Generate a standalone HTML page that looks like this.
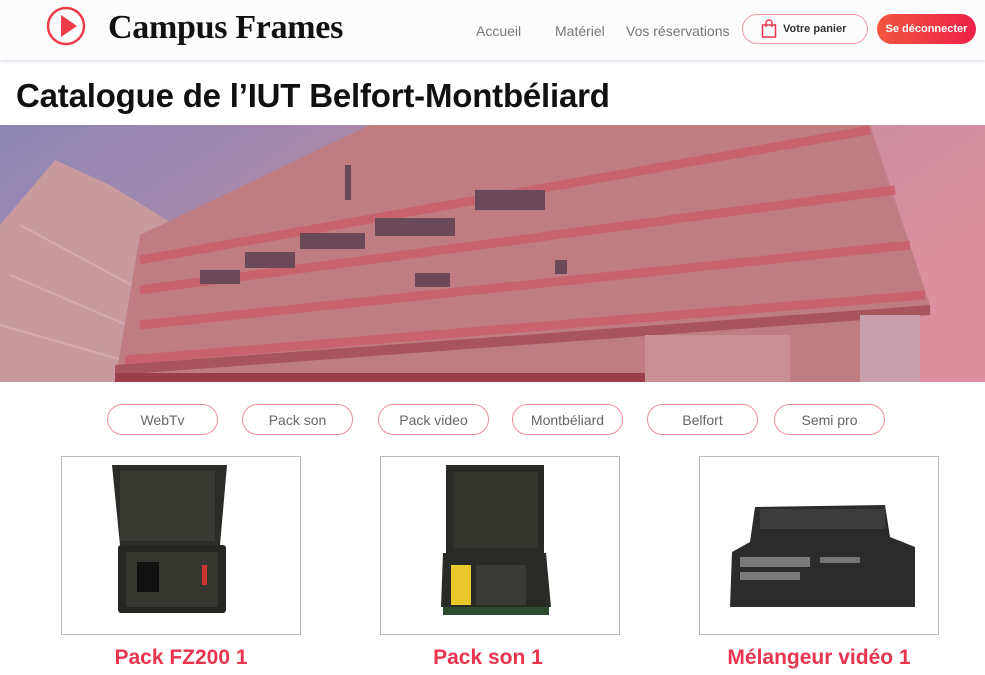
<!DOCTYPE html>
<html><head><meta charset="utf-8"><style>
*{margin:0;padding:0;box-sizing:border-box}
body{width:985px;height:675px;overflow:hidden;background:#fff;font-family:"Liberation Sans",sans-serif;position:relative}
.hdr{position:absolute;left:0;top:0;width:985px;height:60px;background:#fcfcfd;box-shadow:0 2px 3px #dfe3ea}
.logo{position:absolute;left:108px;top:9px;font-size:34px;color:#111;font-family:"Liberation Serif",serif;font-weight:bold;letter-spacing:-0.3px}
.nav{position:absolute;top:23px;font-size:14px;color:#777}
.pan{position:absolute;left:742px;top:14px;width:126px;height:30px;border:1.5px solid #ef9aa6;border-radius:15px;font-size:11px;font-weight:bold;color:#333;padding:8px 0 0 40px}
.dec{position:absolute;left:877px;top:14px;width:99px;height:30px;border-radius:15px;background:linear-gradient(90deg,#f2563e,#ee2049);color:#fff;font-size:11px;font-weight:bold;text-align:center;padding-top:9px}
h1{position:absolute;left:16px;top:77px;font-size:33px;font-weight:bold;color:#111;letter-spacing:-0.2px}
.ban{position:absolute;left:0;top:125px}
.pill{position:absolute;top:404px;width:111px;height:31px;border:1.5px solid #ef8f9c;border-radius:16px;text-align:center;font-size:14px;color:#666;padding-top:7px}
.card{position:absolute;top:456px;width:240px;height:179px;border:1px solid #bbb}
.t{position:absolute;top:646px;width:240px;text-align:center;font-size:21px;font-weight:bold;color:#e8344e}
</style></head><body>
<div class="hdr">
<svg style="position:absolute;left:44px;top:6px" width="46" height="40" viewBox="0 0 46 40"><circle cx="22" cy="20" r="18" fill="none" stroke="#ee3b4a" stroke-width="2.5"/><path d="M17 9 L33 20 L17 31Z" fill="#ee3b4a"/></svg>
<div class="logo">Campus Frames</div>
<div class="nav" style="left:476px">Accueil</div>
<div class="nav" style="left:555px">Matériel</div>
<div class="nav" style="left:626px">Vos réservations</div>
<div class="pan"><svg style="position:absolute;left:18px;top:4px" width="16" height="19" viewBox="0 0 16 19"><rect x="1.5" y="6" width="13" height="12" fill="none" stroke="#e8344e" stroke-width="1.5"/><path d="M5 8V4a3 3 0 0 1 6 0v4" fill="none" stroke="#e8344e" stroke-width="1.5"/></svg>Votre panier</div>
<div class="dec">Se déconnecter</div>
</div>
<h1>Catalogue de l’IUT Belfort-Montbéliard</h1>
<svg class="ban" width="985" height="257" viewBox="0 0 985 257">
<defs><linearGradient id="s" x1="0" x2="1" y1="0" y2="0.4"><stop offset="0" stop-color="#8c86b6"/><stop offset="0.5" stop-color="#b98ba6"/><stop offset="1" stop-color="#dc8f9d"/></linearGradient></defs>
<rect width="985" height="257" fill="url(#s)"/>
<polygon points="0,100 55,35 110,60 175,100 175,257 0,257" fill="#c89a9e"/>
<g stroke="#d8aab0" stroke-width="2" fill="none"><path d="M20 100 L150 170 M10 150 L150 210 M0 200 L140 240"/></g>
<polygon points="140,110 370,0 870,0 930,180 860,185 860,257 115,257" fill="#bf7d82"/>
<g stroke="#c8636d" stroke-width="9" fill="none"><path d="M140 135 L870 5"/><path d="M140 165 L895 65"/><path d="M140 200 L910 120"/><path d="M125 235 L925 170"/></g>
<polygon points="115,240 930,180 930,190 115,250" fill="#a8545c"/>
<rect x="115" y="248" width="530" height="9" fill="#9a3f48"/>
<rect x="645" y="210" width="145" height="47" fill="#c99094"/>
<rect x="860" y="190" width="60" height="67" fill="#c8a0ad"/>
<g fill="#6a4a58"><rect x="475" y="65" width="70" height="20"/><rect x="375" y="93" width="80" height="18"/><rect x="300" y="108" width="65" height="16"/><rect x="245" y="127" width="50" height="16"/><rect x="200" y="145" width="40" height="14"/><rect x="415" y="148" width="35" height="14"/><rect x="345" y="40" width="6" height="35"/><rect x="555" y="135" width="12" height="14"/></g>
</svg>
<div class="pill" style="left:107px">WebTv</div>
<div class="pill" style="left:242px">Pack son</div>
<div class="pill" style="left:378px">Pack video</div>
<div class="pill" style="left:512px">Montbéliard</div>
<div class="pill" style="left:647px">Belfort</div>
<div class="pill" style="left:774px">Semi pro</div>
<div class="card" style="left:61px"><svg width="238" height="177"><polygon points="50,8 165,8 158,88 58,88" fill="#2b2b28"/><rect x="58" y="14" width="95" height="70" fill="#3a3a35"/><rect x="56" y="88" width="108" height="68" rx="3" fill="#252522"/><rect x="64" y="95" width="92" height="55" fill="#363630"/><rect x="75" y="105" width="22" height="30" fill="#111"/><rect x="140" y="108" width="5" height="20" fill="#c33"/></svg></div>
<div class="card" style="left:380px"><svg width="238" height="177"><rect x="65" y="8" width="98" height="88" fill="#2a2a27"/><rect x="72" y="15" width="85" height="76" fill="#353530"/><polygon points="62,96 165,96 170,150 60,150" fill="#2a2a27"/><rect x="70" y="108" width="20" height="40" fill="#e8c82a"/><rect x="95" y="108" width="50" height="40" fill="#3a3a36"/><rect x="62" y="150" width="106" height="8" fill="#2c4a2c"/></svg></div>
<div class="card" style="left:699px"><svg width="238" height="177"><polygon points="55,50 185,48 190,80 215,90 215,150 30,150 32,95 50,85" fill="#2b2b2b"/><rect x="60" y="52" width="125" height="20" fill="#3c3c3c"/><rect x="40" y="100" width="70" height="10" fill="#ccc" opacity=".5"/><rect x="40" y="115" width="60" height="8" fill="#ccc" opacity=".5"/><rect x="120" y="100" width="40" height="6" fill="#aaa" opacity=".6"/></svg></div>
<div class="t" style="left:61px">Pack FZ200 1</div>
<div class="t" style="left:368px">Pack son 1</div>
<div class="t" style="left:699px">Mélangeur vidéo 1</div>
</body></html>
